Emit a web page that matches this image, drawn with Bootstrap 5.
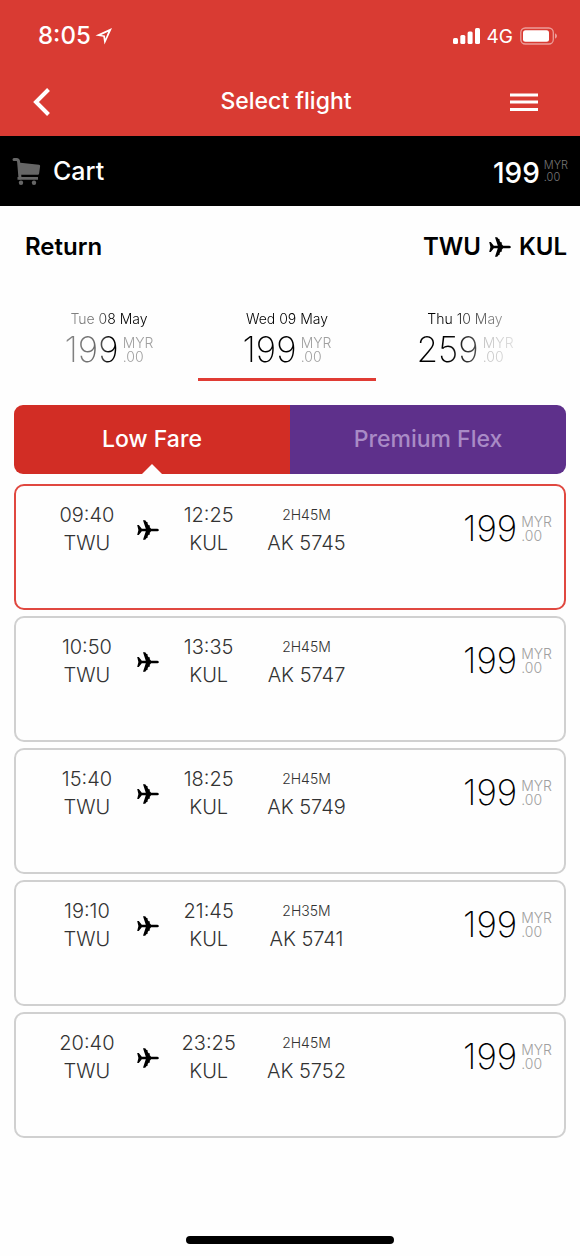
<!DOCTYPE html>
<html lang="en">
<head>
<meta charset="utf-8">
<meta name="viewport" content="width=device-width, initial-scale=1">
<title>Select flight</title>
<link href="https://cdn.jsdelivr.net/npm/bootstrap@5.3.0/dist/css/bootstrap.min.css" rel="stylesheet">
<style>
  body { font-family: Inter, "Liberation Sans", sans-serif; background: #fefefe; color: #000; line-height: 1; }
  button { border: 0; background: none; padding: 0; color: inherit; }
  svg { display: block; flex: none; }
  .app-top { background: #d93b33; color: #fff; }
  .status-row { height: 68px; padding: 4px 22px 0 38px; font-size: 24px; }
  .status-row .network { font-size: 19px; margin: 0 7px 0 6px; }
  .title-row { height: 68px; padding: 0 32px; }
  .title-row button { flex: 1 1 0; }
  .title-row h1 { font-size: 23px; font-weight: 500; }
  .cart-bar { height: 70px; background: #000; color: #fff; padding: 0 12px; }
  .cart-bar .cart-name { font-size: 25px; font-weight: 500; margin-left: 12px; }
  .route-row { height: 82px; padding: 0 13px 0 25px; font-size: 24px; font-weight: 600; }
  .route-row h2 { font-size: 24px; font-weight: 600; }
  .route-row svg { margin: 0 8px; }

  .price-amount { font-size: 35px; font-weight: 200; line-height: 28px; }
  .price-unit { font-size: 14px; font-weight: 300; line-height: 14px; color: #a0a0a0; margin: 1px 0 0 4px; text-align: left; }
  .cart-bar .price-amount { font-size: 28px; font-weight: 500; }
  .cart-bar .price-unit { font-size: 11px; line-height: 12px; color: #777; }

  .date-strip { padding: 22px 26px 0 20px; -webkit-mask-image: linear-gradient(90deg, transparent 0, rgba(0,0,0,.45) 11%, rgba(0,0,0,.6) 17%, #000 19%, #000 77%, rgba(0,0,0,.3) 89%, transparent 100%); mask-image: linear-gradient(90deg, transparent 0, rgba(0,0,0,.45) 11%, rgba(0,0,0,.6) 17%, #000 19%, #000 77%, rgba(0,0,0,.3) 89%, transparent 100%); }
  .date-tab { flex: 1 1 0; height: 71px; border-bottom: 3px solid transparent; font-size: 14px; font-weight: 300; padding-bottom: 15px; }
  .date-tab.active { border-color: #e03c34; }
  .date-tab .tab-date { display: block; line-height: 18px; margin-bottom: 7px; }

  .fare-area { padding: 24px 14px 0; }
  .fare-tabs { border-radius: 9px; overflow: hidden; }
  .fare-tab { flex: 1 1 0; height: 69px; color: #fff; font-size: 23px; font-weight: 500; }
  .fare-low { background: #d22d25; position: relative; }
  .fare-low::after { content: ""; position: absolute; bottom: 0; left: 50%; margin-left: -10px; border: 10px solid transparent; border-top: 0; border-bottom-color: #fefefe; }
  .fare-flex { background: #5e308b; color: #a98bc6; }

  .flight-list { gap: 6px; margin-top: 10px; }
  .flight { display: grid; grid-template-columns: 78fr 44fr 78fr 118fr 187fr; width: 100%; height: 126px; padding: 15px 12px 0 32px; border: 2px solid #d0d0d0; border-radius: 10px; font-size: 20px; font-weight: 300; line-height: 28px; color: #333; text-align: center; align-items: start; }
  .flight.selected { border-color: #e04840; }
  .flight svg { margin: 19px auto 0; color: #000; }
  .flight .duration { display: block; font-size: 14px; }
  .flight .price { padding-top: 13px; color: #000; }
  .home-bar { width: 36%; height: 8px; border-radius: 4px; background: #000; margin: 98px auto 12px; }
</style>
</head>
<body>
<svg width="0" height="0" class="position-absolute" aria-hidden="true">
  <symbol id="plane" viewBox="0 0 22 20"><path fill="currentColor" d="M.2 5h1.6l3 3.700h4L6 .3h2.200l1.400 1.800.7-.2.500 1.400-.3.500 1.200 1.500.7-.2.500 1.400-.3.500 1.500 1.700h5.400c1.500 0 2.400.6 2.400 1.300s-.9 1.300-2.400 1.300h-5.400l-1.500 1.700.3.500-.5 1.400-.7-.2-1.200 1.500.3.500-.5 1.400-.7-.2-1.400 1.800H6l2.800-8.400h-4l-3 3.700H.2l1.200-5z"/></symbol>
</svg>

<header class="app-top">
  <div class="status-row d-flex align-items-center">
    <span class="fw-medium">8:05</span>
    <svg class="ms-1" width="18" height="18" viewBox="0 0 18 18" aria-hidden="true"><path fill="#fff" fill-rule="evenodd" d="M17 1 9.500 17.500 8.300 9.700.5 8.500zM13.200 4.700 6.200 7.900l3.700.6.500 3.200z"/></svg>
    <svg class="ms-auto" width="28" height="18" viewBox="0 0 28 18" aria-hidden="true"><g fill="#fff"><rect x="0" y="11" width="5" height="6" rx="1.500"/><rect x="7.300" y="8" width="5" height="9" rx="1.500"/><rect x="14.600" y="4.500" width="5" height="12.500" rx="1.500"/><rect x="22" y="1" width="5" height="16" rx="1.500"/></g></svg>
    <span class="network">4G</span>
    <svg width="38" height="18" viewBox="0 0 38 18" aria-hidden="true"><rect x=".8" y="1" width="32.500" height="16" rx="4.500" fill="none" stroke="#fff" stroke-opacity=".5" stroke-width="1.300"/><rect x="3" y="3.300" width="26" height="11.400" rx="2.500" fill="#fff"/><path d="M35 6.500c2.600.6 2.600 4.400 0 5z" fill="#fff" fill-opacity=".5"/></svg>
  </div>
  <nav class="title-row d-flex align-items-center">
    <button type="button" aria-label="Back"><svg width="20" height="28" viewBox="0 0 20 28"><path d="M16.500 1.500 4 14l12.500 12.500" fill="none" stroke="#fff" stroke-width="4"/></svg></button>
    <h1 class="m-0">Select flight</h1>
    <button type="button" class="d-flex justify-content-end pe-2" aria-label="Menu"><svg width="30" height="20" viewBox="0 0 30 20"><path d="M0 3h28M0 10h28M0 17.500h28" stroke="#fff" stroke-width="2.800"/></svg></button>
  </nav>
</header>

<section class="cart-bar d-flex align-items-center">
  <svg width="29" height="28" viewBox="0 0 29 28" aria-hidden="true"><path d="M2 2.500h2.500c1.500 0 2 1 2.100 2.200L8 21" fill="none" stroke="#666" stroke-width="3" stroke-linecap="round"/><path d="M6 5.500 27 7.800c.8.100 1.200.7 1.100 1.400l-1 7.300c-.1.800-.7 1.300-1.500 1.300H7zM5.500 20H26v2.700H5.500z" fill="#666"/><circle cx="9" cy="25.700" r="2.200" fill="#666"/><circle cx="22" cy="25.700" r="2.200" fill="#666"/></svg>
  <span class="cart-name">Cart</span>
  <div class="price d-flex ms-auto pt-1"><span class="price-amount">199</span><span class="price-unit m-0 ms-1">MYR<br>.00</span></div>
</section>

<main>
  <div class="route-row d-flex align-items-center">
    <h2 class="m-0 me-auto">Return</h2>
    <span>TWU</span><svg width="22" height="20" aria-hidden="true"><use href="#plane"/></svg><span>KUL</span>
  </div>

  <div class="date-strip d-flex">
    <button type="button" class="date-tab"><span class="tab-date">Tue 08 May</span><span class="price d-flex justify-content-center"><span class="price-amount">199</span><span class="price-unit">MYR<br>.00</span></span></button>
    <button type="button" class="date-tab active"><span class="tab-date">Wed 09 May</span><span class="price d-flex justify-content-center"><span class="price-amount">199</span><span class="price-unit">MYR<br>.00</span></span></button>
    <button type="button" class="date-tab"><span class="tab-date">Thu 10 May</span><span class="price d-flex justify-content-center"><span class="price-amount">259</span><span class="price-unit">MYR<br>.00</span></span></button>
  </div>

  <div class="fare-area">
    <div class="fare-tabs d-flex">
      <button type="button" class="fare-tab fare-low">Low Fare</button>
      <button type="button" class="fare-tab fare-flex">Premium Flex</button>
    </div>
    <div class="flight-list d-flex flex-column">
      <button type="button" class="flight selected"><span>09:40<br>TWU</span><svg width="22" height="20"><use href="#plane"/></svg><span>12:25<br>KUL</span><span><span class="duration">2H45M</span>AK 5745</span><span class="price d-flex justify-content-end"><span class="price-amount">199</span><span class="price-unit">MYR<br>.00</span></span></button>
      <button type="button" class="flight"><span>10:50<br>TWU</span><svg width="22" height="20"><use href="#plane"/></svg><span>13:35<br>KUL</span><span><span class="duration">2H45M</span>AK 5747</span><span class="price d-flex justify-content-end"><span class="price-amount">199</span><span class="price-unit">MYR<br>.00</span></span></button>
      <button type="button" class="flight"><span>15:40<br>TWU</span><svg width="22" height="20"><use href="#plane"/></svg><span>18:25<br>KUL</span><span><span class="duration">2H45M</span>AK 5749</span><span class="price d-flex justify-content-end"><span class="price-amount">199</span><span class="price-unit">MYR<br>.00</span></span></button>
      <button type="button" class="flight"><span>19:10<br>TWU</span><svg width="22" height="20"><use href="#plane"/></svg><span>21:45<br>KUL</span><span><span class="duration">2H35M</span>AK 5741</span><span class="price d-flex justify-content-end"><span class="price-amount">199</span><span class="price-unit">MYR<br>.00</span></span></button>
      <button type="button" class="flight"><span>20:40<br>TWU</span><svg width="22" height="20"><use href="#plane"/></svg><span>23:25<br>KUL</span><span><span class="duration">2H45M</span>AK 5752</span><span class="price d-flex justify-content-end"><span class="price-amount">199</span><span class="price-unit">MYR<br>.00</span></span></button>
    </div>
  </div>
</main>
<div class="home-bar"></div>
<script src="https://cdn.jsdelivr.net/npm/bootstrap@5.3.0/dist/js/bootstrap.bundle.min.js"></script>
</body>
</html>
